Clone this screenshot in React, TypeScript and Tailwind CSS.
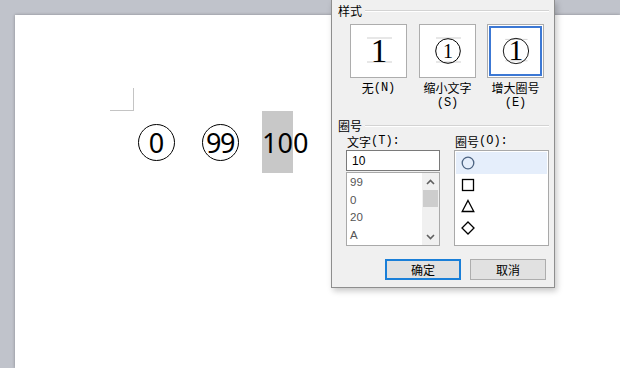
import React from "react";

const cjk = "font-['Noto_Sans_CJK_SC','Noto_Sans',sans-serif]";
const mono = "font-['Liberation_Mono',monospace]";

function Circ({ text, className = "" }: { text: string; className?: string }) {
  return (
    <div
      className={`w-[37px] h-[37px] rounded-full border-[1.3px] border-black flex items-center justify-center shrink-0 ${className}`}
    >
      <span className={text.length > 1 ? "tracking-[-1.5px] -ml-[1px]" : ""}>{text}</span>
    </div>
  );
}

function Header({ label }: { label: string }) {
  return (
    <div className="flex items-center h-[14px] pl-[6px] pr-[5px]">
      <span className="text-[12px] leading-[14px] text-black">{label}</span>
      <div className="flex-1 ml-[3px] h-[2px] border-t border-[#d3d3d3] border-b border-b-white" />
    </div>
  );
}

function StyleBox({ variant }: { variant: 0 | 1 | 2 }) {
  const svg = (
    <svg width="55" height="52" viewBox="0 0 55 52">
      <line x1="16" y1="13" x2="41" y2="13" stroke="#cfcfcf" strokeWidth="1" />
      <line x1="16" y1="37" x2="41" y2="37" stroke="#cfcfcf" strokeWidth="1" />
      {variant === 1 && <circle cx="28" cy="26" r="12.3" fill="none" stroke="#000" strokeWidth="1" />}
      {variant === 2 && <circle cx="28" cy="26" r="14.2" fill="none" stroke="#000" strokeWidth="1" />}
      <text
        x="28"
        y={variant === 1 ? 33 : 36.5}
        textAnchor="middle"
        fontFamily="'Liberation Serif', serif"
        fontSize={variant === 1 ? 20 : 33}
        fill="#000"
      >
        1
      </text>
    </svg>
  );
  if (variant === 2) {
    return (
      <div className="w-[57px] h-[54px] border border-[#adadad] bg-white p-[1px]">
        <div className="w-full h-full border-2 border-[#3c78d4] flex items-center justify-center overflow-hidden">
          {svg}
        </div>
      </div>
    );
  }
  return (
    <div className="w-[57px] h-[54px] border border-[#adadad] bg-white flex items-center justify-center overflow-hidden">
      {svg}
    </div>
  );
}

function Chevron({ up }: { up?: boolean }) {
  return (
    <svg width="9" height="6" viewBox="0 0 9 6">
      <polyline
        points={up ? "1,5 4.5,1.5 8,5" : "1,1 4.5,4.5 8,1"}
        fill="none"
        stroke="#606060"
        strokeWidth="1.6"
      />
    </svg>
  );
}

function Dialog() {
  return (
    <div
      className={`absolute left-[331px] top-0 w-[224px] h-[288px] bg-[#f0f0f0] border border-t-0 border-[#8e8e8e] shadow-[2px_3px_6px_rgba(0,0,0,0.22)] ${cjk} text-[12px] text-black`}
    >
      <div className="mt-[4px]">
        <Header label="样式" />
      </div>
      <div className="flex pl-[18px] mt-[6px]">
        <div className="flex flex-col items-center w-[57px]">
          <StyleBox variant={0} />
          <div className="mt-[3px] h-[14px] leading-[14px] flex items-center">
            <span>无</span>
            <span className={mono}>(N)</span>
          </div>
        </div>
        <div className="flex flex-col items-center w-[57px] ml-[12px]">
          <StyleBox variant={1} />
          <div className="mt-[3px] h-[14px] leading-[14px]">缩小文字</div>
          <div className={`mt-[2px] h-[13px] leading-[13px] ${mono}`}>(S)</div>
        </div>
        <div className="flex flex-col items-center w-[57px] ml-[11px]">
          <StyleBox variant={2} />
          <div className="mt-[3px] h-[14px] leading-[14px]">增大圈号</div>
          <div className={`mt-[2px] h-[13px] leading-[13px] ${mono}`}>(E)</div>
        </div>
      </div>
      <div className="mt-[9px]">
        <Header label="圈号" />
      </div>
      <div className="flex mt-[2px] pl-[14px]">
        <div className="flex flex-col w-[94px]">
          <div className="h-[13px] leading-[13px] pl-[1px] flex items-center">
            <span>文字</span>
            <span className={mono}>(T):</span>
          </div>
          <div className="mt-[2px] h-[21px] border border-[#7a7a7a] bg-white pl-[5px] flex items-center leading-none font-['Liberation_Sans',sans-serif] text-[12px]">
            10
          </div>
          <div className="mt-[1px] h-[74px] border border-[#a9a9a9] bg-white flex">
            <div className="flex-1 pl-[3px] pt-[1px] font-['Liberation_Sans',sans-serif] text-[11.5px] text-[#555]">
              <div className="h-[17.5px] flex items-center">99</div>
              <div className="h-[17.5px] flex items-center">0</div>
              <div className="h-[17.5px] flex items-center">20</div>
              <div className="h-[17.5px] flex items-center">A</div>
            </div>
            <div className="w-[17px] bg-[#f0f0f0] flex flex-col items-center">
              <div className="h-[17px] flex items-center justify-center">
                <Chevron up />
              </div>
              <div className="w-[15px] h-[17px] bg-[#cdcdcd]" />
              <div className="flex-1" />
              <div className="h-[17px] flex items-center justify-center">
                <Chevron />
              </div>
            </div>
          </div>
        </div>
        <div className="flex flex-col w-[95px] ml-[14px]">
          <div className="h-[13px] leading-[13px] pl-[1px] flex items-center">
            <span>圈号</span>
            <span className={mono}>(O):</span>
          </div>
          <div className="mt-[2px] h-[96px] border border-[#a9a9a9] bg-white p-[1px]">
            <div className="h-[22px] bg-[#e5eefb] flex items-center pl-[5px]">
              <svg width="14" height="14" viewBox="0 0 14 14">
                <circle cx="7" cy="7" r="5.8" fill="none" stroke="#4d6482" strokeWidth="1.3" />
              </svg>
            </div>
            <div className="h-[21.5px] flex items-center pl-[5px]">
              <svg width="14" height="14" viewBox="0 0 14 14">
                <rect x="1.5" y="1.5" width="11" height="11" fill="none" stroke="#000" strokeWidth="1.3" />
              </svg>
            </div>
            <div className="h-[21.5px] flex items-center pl-[5px]">
              <svg width="14" height="14" viewBox="0 0 14 14">
                <polygon points="7,1.5 12.8,12.5 1.2,12.5" fill="none" stroke="#000" strokeWidth="1.3" />
              </svg>
            </div>
            <div className="h-[21.5px] flex items-center pl-[5px]">
              <svg width="14" height="14" viewBox="0 0 14 14">
                <polygon points="7,1 13,7 7,13 1,7" fill="none" stroke="#000" strokeWidth="1.3" />
              </svg>
            </div>
          </div>
        </div>
      </div>
      <div className="flex justify-end pr-[8px] mt-[13px] gap-[9px]">
        <div className="w-[76px] h-[21px] border-2 border-[#1a7fd8] bg-[#e1e1e1] flex items-center justify-center leading-none">
          确定
        </div>
        <div className="w-[76px] h-[21px] border border-[#adadad] bg-[#e1e1e1] flex items-center justify-center leading-none">
          取消
        </div>
      </div>
    </div>
  );
}

export default function App() {
  return (
    <div className="relative w-[620px] h-[368px] overflow-hidden bg-[#c0c3cb] pt-[15px] pl-[15px]">
      <div className="h-[353px] bg-white shadow-[0_0_3px_rgba(0,0,0,0.3)] pl-[95px] pt-[73px]">
        <div className="w-[24px] h-[23px] border-r border-b border-[#c4c4c4]" />
        <div className="flex items-center h-[62px] ml-[28px] font-['Noto_Sans',sans-serif] text-[27px] leading-none text-black">
          <Circ text="0" />
          <Circ text="99" className="ml-[27px]" />
          <div className="ml-[23px] flex items-center h-[62px]">
            <span className="bg-[#c8c8c8] h-[62px] flex items-center">10</span>
            <span>0</span>
          </div>
        </div>
      </div>
      <Dialog />
    </div>
  );
}
